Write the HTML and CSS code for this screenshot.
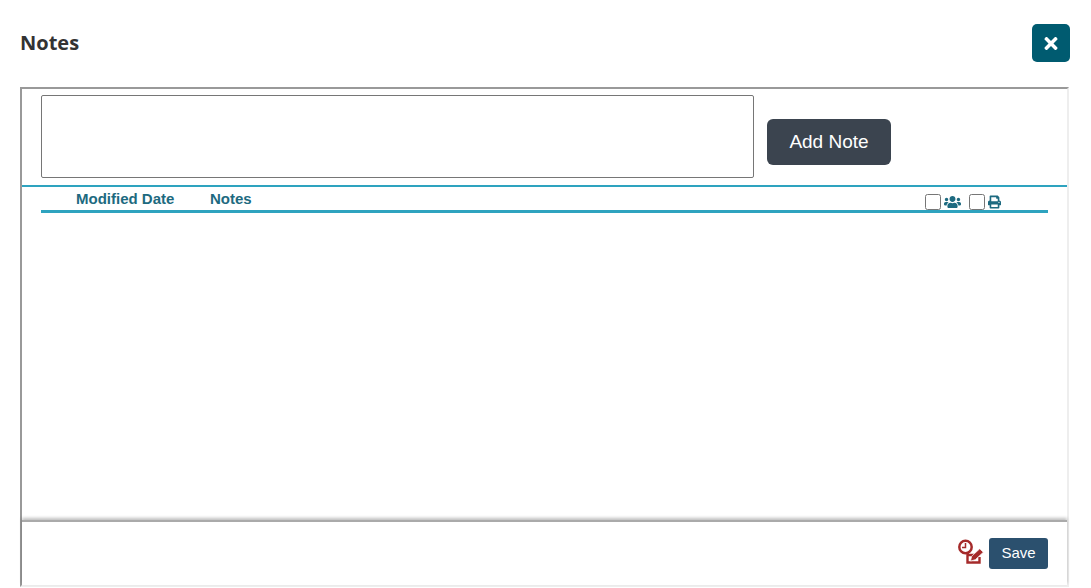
FILE: index.html
```html
<!DOCTYPE html>
<html>
	<head>
		<meta charset="UTF-8">
		<title>Notes</title>
		<link rel="stylesheet" href="styles.css">
	</head>
	<body>
		<div class="head">
			<div class="title">Notes</div>
			<button class="close" type="button">
				<svg width="14" height="19" viewBox="0 0 352 512"><path fill="#fff" d="M242.72 256l100.07-100.07c12.28-12.28 12.28-32.19 0-44.48l-22.24-22.24c-12.28-12.28-32.19-12.28-44.48 0L176 189.28 75.93 89.21c-12.28-12.28-32.19-12.28-44.48 0L9.21 111.45c-12.28 12.28-12.28 32.19 0 44.48L109.28 256 9.21 356.07c-12.28 12.28-12.28 32.19 0 44.48l22.24 22.24c12.28 12.28 32.2 12.28 44.48 0L176 322.72l100.07 100.07c12.28 12.28 32.2 12.28 44.48 0l22.24-22.24c12.28-12.28 12.28-32.19 0-44.48L242.72 256z"/></svg>
			</button>
		</div>
		<div class="panel">
			<div class="add">
				<textarea class="note"></textarea>
				<button class="addbtn" type="button">Add Note</button>
			</div>
			<div class="list">
				<div class="cols">
					<div class="c-date">Modified Date</div>
					<div class="c-notes">Notes</div>
					<div class="c-tools">
						<input type="checkbox">
						<svg class="users" width="17" height="14" viewBox="0 0 640 512"><path fill="#1d6a80" d="M96 224c35.3 0 64-28.7 64-64s-28.7-64-64-64-64 28.7-64 64 28.7 64 64 64zm448 0c35.3 0 64-28.7 64-64s-28.7-64-64-64-64 28.7-64 64 28.7 64 64 64zm32 32h-64c-17.6 0-33.5 7.1-45.1 18.6 40.3 22.1 68.9 62 75.1 109.4h66c17.7 0 32-14.3 32-32v-32c0-35.3-28.7-64-64-64zm-256 0c61.9 0 112-50.1 112-112S381.9 32 320 32 208 82.1 208 144s50.1 112 112 112zm76.8 32h-8.3c-20.8 10-43.9 16-68.5 16s-47.6-6-68.5-16h-8.3C179.6 288 128 339.6 128 403.2V432c0 26.5 21.5 48 48 48h288c26.5 0 48-21.5 48-48v-28.8c0-63.6-51.6-115.2-115.2-115.2zm-223.7-13.4C161.5 263.1 145.6 256 128 256H64c-35.3 0-64 28.7-64 64v32c0 17.7 14.3 32 32 32h65.9c6.3-47.4 34.9-87.3 75.2-109.4z"/></svg>
						<input class="second" type="checkbox">
						<svg class="print" width="13" height="14" viewBox="0 0 512 512"><path fill="#1d6a80" d="M448 192V77.25c0-8.49-3.37-16.62-9.37-22.63L393.37 9.37c-6-6-14.14-9.37-22.63-9.37H96C78.33 0 64 14.33 64 32v160c-35.35 0-64 28.65-64 64v112c0 8.84 7.16 16 16 16h48v96c0 17.67 14.33 32 32 32h320c17.67 0 32-14.33 32-32v-96h48c8.84 0 16-7.16 16-16V256c0-35.35-28.65-64-64-64zm-64 256H128v-96h256v96zm0-224H128V64h192v48c0 8.84 7.16 16 16 16h48v96zm48 72c-13.25 0-24-10.75-24-24 0-13.26 10.75-24 24-24s24 10.74 24 24c0 13.25-10.75 24-24 24z"/></svg>
					</div>
				</div>
			</div>
			<div class="foot">
				<svg class="audit" width="26" height="28" viewBox="0 0 26 28">
					<path d="M9.5 15V24.5H21.5V19M9.5 17H18" fill="none" stroke="#a52a2a" stroke-width="2.4"/>
					<circle cx="7.5" cy="9" r="6.2" fill="#fff" stroke="#a52a2a" stroke-width="2.5"/>
					<path d="M7.5 5V9.5H4" fill="none" stroke="#a52a2a" stroke-width="1.5"/>
					<path d="M12.5 23l1.2-4.8 8-7.4 3.6 3.4-8 7.5z" fill="#a52a2a" stroke="#fff" stroke-width="0.7"/>
				</svg>
				<button class="save" type="button">Save</button>
			</div>
		</div>
	</body>
</html>
```

FILE: styles.css
```css
* {
	box-sizing: border-box;
}

body {
	margin: 0;
	background-color: #fff;
	font-family: "Liberation Sans", Arial, sans-serif;
}

.head {
	display: flex;
	justify-content: space-between;
	align-items: center;
	height: 87px;
	padding: 24px 21px 25px 20px;
}

.title {
	margin-bottom: 2px;
	font-family: "Open Sans", sans-serif;
	font-size: 20px;
	font-weight: 700;
	color: #333;
}

.close {
	display: flex;
	justify-content: center;
	align-items: center;
	width: 38px;
	height: 38px;
	padding: 0;
	border: 0;
	border-radius: 5px;
	background-color: #005b70;
}

.panel {
	display: flex;
	flex-direction: column;
	width: 1049px;
	height: 500px;
	margin-left: 20px;
	border-top: 2px solid #999;
	border-left: 2px solid #999;
	border-right: 2px solid #eee;
	border-bottom: 2px solid #eee;
}

.add {
	display: flex;
	align-items: flex-end;
	height: 98px;
	padding: 6px 0 0 19px;
	border-bottom: 2px solid #2ea3bf;
}

.note {
	display: block;
	width: 713px;
	height: 83px;
	margin: 0 0 7px 0;
	padding: 0;
	border: 1px solid #767676;
	border-radius: 2px;
	resize: none;
	background-color: #fff;
}

.addbtn {
	width: 124px;
	height: 46px;
	margin: 0 0 20px 13px;
	padding: 0;
	border: 0;
	border-radius: 6px;
	background-color: #3b444f;
	color: #fff;
	font-family: "Liberation Sans", Arial, sans-serif;
	font-size: 19px;
}

.list {
	flex: 1;
	padding: 0 19px;
}

.cols {
	display: flex;
	align-items: flex-start;
	height: 26px;
	padding-top: 3px;
	padding-left: 35px;
	border-bottom: 3px solid #2ea3bf;
	color: #1d6a80;
	font-size: 15px;
	font-weight: 700;
	line-height: 17px;
}

.c-date {
	width: 134px;
}

.c-notes {
	width: 715px;
}

.c-tools {
	display: flex;
	align-items: center;
	margin-top: 4px;
}

.c-tools input {
	width: 16px;
	height: 16px;
	margin: 0;
}

.users {
	margin-left: 3px;
}

.c-tools .second {
	margin-left: 8px;
}

.print {
	margin-left: 3px;
}

.foot {
	display: flex;
	justify-content: flex-end;
	align-items: flex-start;
	height: 65px;
	padding: 16px 19px 0 0;
	border-top: 2px solid #aaa;
	box-shadow: 0 -2px 3px rgba(0, 0, 0, 0.25);
}

.audit {
	margin: 0 5px 0 0;
}

.save {
	width: 59px;
	height: 31px;
	padding: 0 0 2px;
	border: 0;
	border-radius: 3px;
	background-color: #2b506e;
	color: #fff;
	font-family: "Liberation Sans", Arial, sans-serif;
	font-size: 15px;
}
```
